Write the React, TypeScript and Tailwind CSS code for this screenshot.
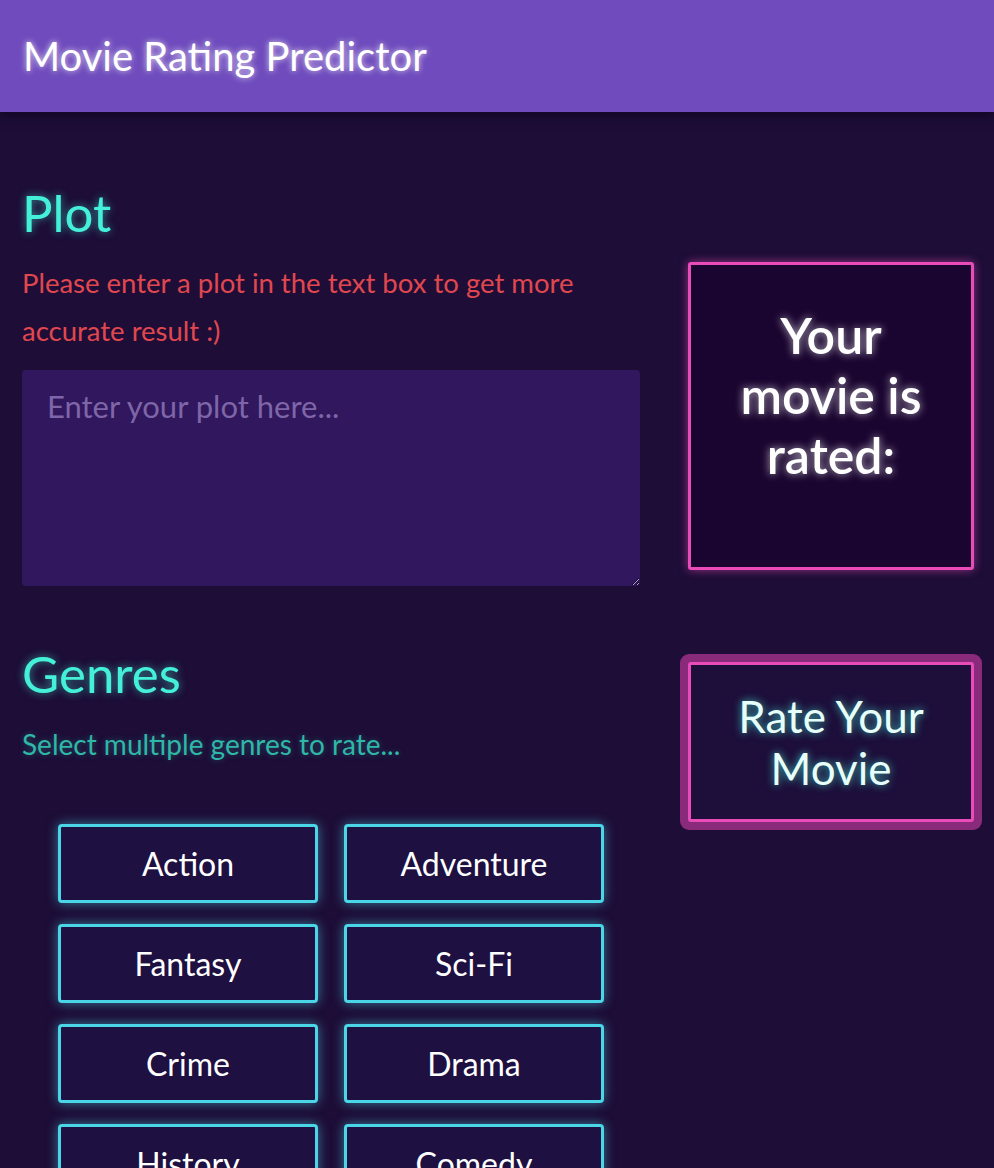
const genres = [
  "Action",
  "Adventure",
  "Fantasy",
  "Sci-Fi",
  "Crime",
  "Drama",
  "History",
  "Comedy",
  "Horror",
  "Romance",
];

export default function App() {
  return (
    <div className="min-h-screen bg-[#1d0d37] font-[Lato,sans-serif] text-white">
      {/* Header */}
      <header className="flex h-[112px] items-center bg-[#6f4bbd] px-[23px] shadow-[0_4px_10px_rgba(10,0,25,0.6)]">
        <h1 className="text-[40px] leading-none text-white [text-shadow:0_0_6px_rgba(255,255,255,0.8)]">
          Movie Rating Predictor
        </h1>
      </header>

      <main className="flex justify-between pl-[22px] pr-[20px] pt-[71px] pb-10">
        {/* Left column */}
        <section className="w-[618px]">
          <h2 className="text-[51px] leading-[60px] text-[#45f0d8] [text-shadow:0_0_8px_rgba(69,240,216,0.6)]">
            Plot
          </h2>
          <p className="mt-4 text-[27.5px] leading-[48px] text-[#e0474f]">
            Please enter a plot in the text box to get more accurate result :)
          </p>
          <textarea
            placeholder="Enter your plot here..."
            className="mt-[15px] block h-[216px] w-full rounded-[4px] bg-[#31175e] px-[25px] pt-[18px] text-[31px] leading-[1.2] text-white outline-none placeholder:text-[#7e66a8]"
          />

          <h2 className="mt-[58px] text-[51px] leading-[60px] text-[#45f0d8] [text-shadow:0_0_8px_rgba(69,240,216,0.6)]">
            Genres
          </h2>
          <p className="mt-4 text-[28px] leading-[48px] text-[#2fb7a7] [text-shadow:0_0_6px_rgba(47,183,167,0.4)]">
            Select multiple genres to rate...
          </p>

          <div className="mx-auto mt-[56px] grid w-[546px] grid-cols-2 gap-x-[26px] gap-y-[21px]">
            {genres.map((g) => (
              <button
                key={g}
                className="flex h-[79px] items-center justify-center rounded-[4px] border-[3px] border-[#4ad6e6] bg-[#1e1040] text-[32px] text-white shadow-[0_0_12px_rgba(74,214,230,0.55)]"
              >
                {g}
              </button>
            ))}
          </div>
        </section>

        {/* Right column */}
        <aside className="flex w-[286px] flex-col pt-[79px]">
          <div className="h-[308px] rounded-[3px] border-[3px] border-[#e94bb8] bg-[#1a0530] pt-[40px] text-center shadow-[0_0_10px_rgba(233,75,184,0.6)]">
            <p className="px-5 text-[50px] font-semibold leading-[60px] text-white [text-shadow:0_0_8px_rgba(255,255,255,0.7)]">
              Your movie is rated:
            </p>
          </div>

          <button className="mt-[92px] h-[160px] w-full rounded-[3px] border-[3px] border-[#e94bb8] bg-[#1d0e3a] text-[44px] leading-[52px] text-[#e6fffb] shadow-[0_0_0_8px_#8a2a7b] [text-shadow:0_0_8px_rgba(69,240,216,0.8)]">
            Rate Your
            <br />
            Movie
          </button>
        </aside>
      </main>
    </div>
  );
}
